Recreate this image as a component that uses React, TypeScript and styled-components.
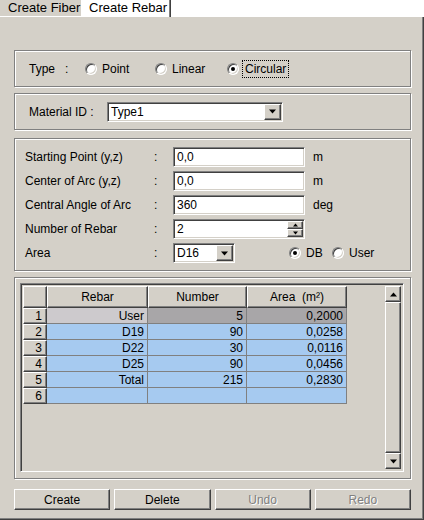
import React, { FC } from 'react';
import styled, { createGlobalStyle, css } from 'styled-components';

// Local Variables
const FACE = '#d4d0c8';
const SHADOW = '#808080';
const DARK = '#404040';

const GlobalStyle = createGlobalStyle`
  html, body {
    margin: 0;
    padding: 0;
    background: #ffffff;
  }
  body {
    font-family: "Liberation Sans", Arial, sans-serif;
    font-size: 12px;
    color: #000000;
  }
`;

const raised = css`
  border: 1px solid;
  border-color: #ffffff ${DARK} ${DARK} #ffffff;
  box-shadow: inset -1px -1px 0 ${SHADOW};
  background: ${FACE};
`;

const sunken = css`
  border: 1px solid;
  border-color: ${SHADOW} #ffffff #ffffff ${SHADOW};
  box-shadow: inset 1px 1px 0 ${DARK}, inset -1px -1px 0 ${FACE};
`;

const Root = styled.div`
  width: 424px;
  height: 520px;
  display: flex;
  flex-direction: column;
  overflow: hidden;
`;

const TabStrip = styled.div`
  height: 17px;
  display: flex;
  background: #ffffff;
`;

const Tab = styled.div<{ $active?: boolean }>`
  box-sizing: border-box;
  height: 17px;
  line-height: 15px;
  white-space: nowrap;
  ${({ $active }) => ($active
    ? css`
      width: 89px;
      padding-left: 7px;
      font-size: 13px;
      background: #ffffff;
      border-right: 1px solid ${DARK};
      box-shadow: inset -1px 0 0 ${SHADOW};
    `
    : css`
      width: 82px;
      padding-left: 8px;
      font-size: 13px;
      background: ${FACE};
      border-right: 1px solid #ffffff;
      border-bottom: 1px solid #ffffff;
    `)}
`;

const Panel = styled.div`
  flex: 1;
  box-sizing: border-box;
  background: ${FACE};
  padding: 33px 12px 0 14px;
  border-right: 1px solid ${DARK};
  border-bottom: 1px solid ${DARK};
  box-shadow: inset -1px -1px 0 ${SHADOW};
  display: flex;
  flex-direction: column;
`;

const GroupBox = styled.div<{ $height: number; $gap: number }>`
  box-sizing: border-box;
  height: ${({ $height }) => $height}px;
  margin-bottom: ${({ $gap }) => $gap}px;
  border: 1px solid ${SHADOW};
  box-shadow: inset 1px 1px 0 #ffffff, 1px 1px 0 #ffffff;
`;

const TypeRow = styled.div`
  height: 100%;
  display: flex;
  align-items: center;
  padding-left: 14px;
`;

const TypeLabel = styled.span`
  width: 36px;
`;

const Colon = styled.span`
  width: 20px;
`;

const RadioOption = styled.label<{ $width?: number }>`
  display: inline-flex;
  align-items: center;
  gap: 5px;
  width: ${({ $width }) => ($width ? `${$width}px` : 'auto')};
`;

const RadioDot = styled.span<{ $checked?: boolean }>`
  position: relative;
  box-sizing: border-box;
  width: 12px;
  height: 12px;
  border-radius: 50%;
  background: #ffffff;
  border: 1px solid;
  border-color: ${SHADOW} #ffffff #ffffff ${SHADOW};
  box-shadow: inset 1px 1px 0 ${DARK}, inset -1px -1px 0 ${FACE};

  ${({ $checked }) => $checked && css`
    &::after {
      content: '';
      position: absolute;
      left: 3px;
      top: 3px;
      width: 4px;
      height: 4px;
      border-radius: 50%;
      background: #000000;
    }
  `}
`;

const FocusText = styled.span`
  outline: 1px dotted #000000;
  outline-offset: 1px;
  padding: 0 1px;
`;

const MaterialRow = styled.div`
  height: 100%;
  display: flex;
  align-items: center;
  padding-left: 14px;
`;

const MaterialLabel = styled.span`
  width: 78px;
`;

const Field = styled.div<{ $width: number }>`
  ${sunken};
  position: relative;
  box-sizing: border-box;
  width: ${({ $width }) => $width}px;
  height: 20px;
  background: #ffffff;
  display: flex;
  align-items: center;
  padding-left: 3px;
`;

const DropButton = styled.span`
  ${raised};
  position: absolute;
  right: 1px;
  top: 1px;
  box-sizing: border-box;
  width: 17px;
  height: 16px;
  display: flex;
  align-items: center;
  justify-content: center;
`;

const SpinBox = styled.span`
  position: absolute;
  right: 1px;
  top: 1px;
  width: 16px;
  height: 16px;
  display: flex;
  flex-direction: column;
`;

const SpinButton = styled.span`
  ${raised};
  box-sizing: border-box;
  flex: 1;
  display: flex;
  align-items: center;
  justify-content: center;
`;

const FormGrid = styled.div`
  display: grid;
  grid-template-columns: 129px 19px 132px auto;
  grid-auto-rows: 20px;
  row-gap: 4px;
  align-items: center;
  padding: 8px 0 0 10px;
`;

const Unit = styled.span`
  padding-left: 8px;
`;

const AreaCell = styled.div`
  grid-column: 3 / span 2;
  display: flex;
  align-items: center;
`;

const Radios = styled.div`
  display: flex;
  margin-left: 54px;
`;

const Frame = styled.div`
  ${sunken};
  box-sizing: border-box;
  margin: 5px 0 0 5px;
  width: 384px;
  height: 189px;
  padding: 2px;
  display: flex;
  background: ${FACE};
`;

const GridArea = styled.div`
  flex: 1;
`;

const Grid = styled.div`
  display: grid;
  grid-template-columns: 24px 101px 99px 100px;
  grid-template-rows: 22px;
  grid-auto-rows: 16px;
`;

const HeadCell = styled.div<{ $align?: string }>`
  ${raised};
  box-sizing: border-box;
  display: flex;
  align-items: center;
  justify-content: ${({ $align }) => $align || 'center'};
  padding-right: ${({ $align }) => ($align ? '4px' : '0')};
  line-height: 1;
`;

const DataCell = styled.div<{ $bg: string }>`
  box-sizing: border-box;
  background: ${({ $bg }) => $bg};
  border-right: 1px solid ${SHADOW};
  border-bottom: 1px solid ${SHADOW};
  display: flex;
  align-items: center;
  justify-content: flex-end;
  padding-right: 3px;
  line-height: 1;
`;

const ScrollBar = styled.div`
  width: 16px;
  display: flex;
  flex-direction: column;
`;

const ScrollButton = styled.div`
  ${raised};
  box-sizing: border-box;
  width: 16px;
  height: 16px;
  display: flex;
  align-items: center;
  justify-content: center;
`;

const ScrollThumb = styled.div`
  ${raised};
  box-sizing: border-box;
  flex: 1;
`;

const ButtonRow = styled.div`
  display: flex;
  gap: 4px;
  margin-top: 10px;
`;

const Button = styled.button<{ $disabled?: boolean }>`
  ${raised};
  box-sizing: border-box;
  width: 97px;
  height: 21px;
  padding: 0;
  font-family: inherit;
  font-size: 12px;
  color: ${({ $disabled }) => ($disabled ? SHADOW : '#000000')};
  text-shadow: ${({ $disabled }) => ($disabled ? '1px 1px 0 #ffffff' : 'none')};
`;

const rows = [
  { rebar: 'User', number: '5', area: '0,2000', header: true },
  { rebar: 'D19', number: '90', area: '0,0258' },
  { rebar: 'D22', number: '30', area: '0,0116' },
  { rebar: 'D25', number: '90', area: '0,0456' },
  { rebar: 'Total', number: '215', area: '0,2830' },
  { rebar: '', number: '', area: '' },
];

const BLUE = '#a6caf0';

// Local Functions
const Arrow: FC<{ up?: boolean; size?: number }> = ({ up, size = 7 }) => (
  <svg width={size} height={Math.ceil(size / 2) + 1} viewBox="0 0 7 4">
    <polygon points={up ? '3.5,0 7,4 0,4' : '0,0 7,0 3.5,4'} fill="#000" />
  </svg>
);

const Radio: FC<{ checked?: boolean; width?: number; children: React.ReactNode }> = ({
  checked,
  width,
  children,
}) => (
  <RadioOption $width={width}>
    <RadioDot $checked={checked} />
    {children}
  </RadioOption>
);

// Component Definition
const App: FC = () => (
  <Root>
    <GlobalStyle />
    <TabStrip>
      <Tab>Create Fiber</Tab>
      <Tab $active>Create Rebar</Tab>
    </TabStrip>

    <Panel>
      <GroupBox $height={37} $gap={6}>
        <TypeRow>
          <TypeLabel>Type</TypeLabel>
          <Colon>:</Colon>
          <Radio width={70}>Point</Radio>
          <Radio width={72}>Linear</Radio>
          <Radio checked><FocusText>Circular</FocusText></Radio>
        </TypeRow>
      </GroupBox>

      <GroupBox $height={37} $gap={8}>
        <MaterialRow>
          <MaterialLabel>Material ID :</MaterialLabel>
          <Field $width={176}>
            Type1
            <DropButton><Arrow /></DropButton>
          </Field>
        </MaterialRow>
      </GroupBox>

      <GroupBox $height={133} $gap={6}>
        <FormGrid>
          <span>Starting Point (y,z)</span>
          <span>:</span>
          <Field $width={132}>0,0</Field>
          <Unit>m</Unit>

          <span>Center of Arc (y,z)</span>
          <span>:</span>
          <Field $width={132}>0,0</Field>
          <Unit>m</Unit>

          <span>Central Angle of Arc</span>
          <span>:</span>
          <Field $width={132}>360</Field>
          <Unit>deg</Unit>

          <span>Number of Rebar</span>
          <span>:</span>
          <Field $width={132}>
            2
            <SpinBox>
              <SpinButton><Arrow up size={5} /></SpinButton>
              <SpinButton><Arrow size={5} /></SpinButton>
            </SpinBox>
          </Field>
          <span />

          <span>Area</span>
          <span>:</span>
          <AreaCell>
            <Field $width={62}>
              D16
              <DropButton><Arrow /></DropButton>
            </Field>
            <Radios>
              <Radio checked width={43}>DB</Radio>
              <Radio>User</Radio>
            </Radios>
          </AreaCell>
        </FormGrid>
      </GroupBox>

      <GroupBox $height={202} $gap={0}>
        <Frame>
          <GridArea>
            <Grid>
              <HeadCell />
              <HeadCell>Rebar</HeadCell>
              <HeadCell>Number</HeadCell>
              <HeadCell>Area&nbsp;&nbsp;(m²)</HeadCell>
              {rows.map((row, i) => (
                <React.Fragment key={i}>
                  <HeadCell $align="flex-end">{i + 1}</HeadCell>
                  <DataCell $bg={row.header ? '#cdcacd' : BLUE}>{row.rebar}</DataCell>
                  <DataCell $bg={row.header ? '#a8a6a8' : BLUE}>{row.number}</DataCell>
                  <DataCell $bg={row.header ? '#a8a6a8' : BLUE}>{row.area}</DataCell>
                </React.Fragment>
              ))}
            </Grid>
          </GridArea>
          <ScrollBar>
            <ScrollButton><Arrow up /></ScrollButton>
            <ScrollThumb />
            <ScrollButton><Arrow /></ScrollButton>
          </ScrollBar>
        </Frame>
      </GroupBox>

      <ButtonRow>
        <Button>Create</Button>
        <Button>Delete</Button>
        <Button $disabled>Undo</Button>
        <Button $disabled>Redo</Button>
      </ButtonRow>
    </Panel>
  </Root>
);

export default App;
